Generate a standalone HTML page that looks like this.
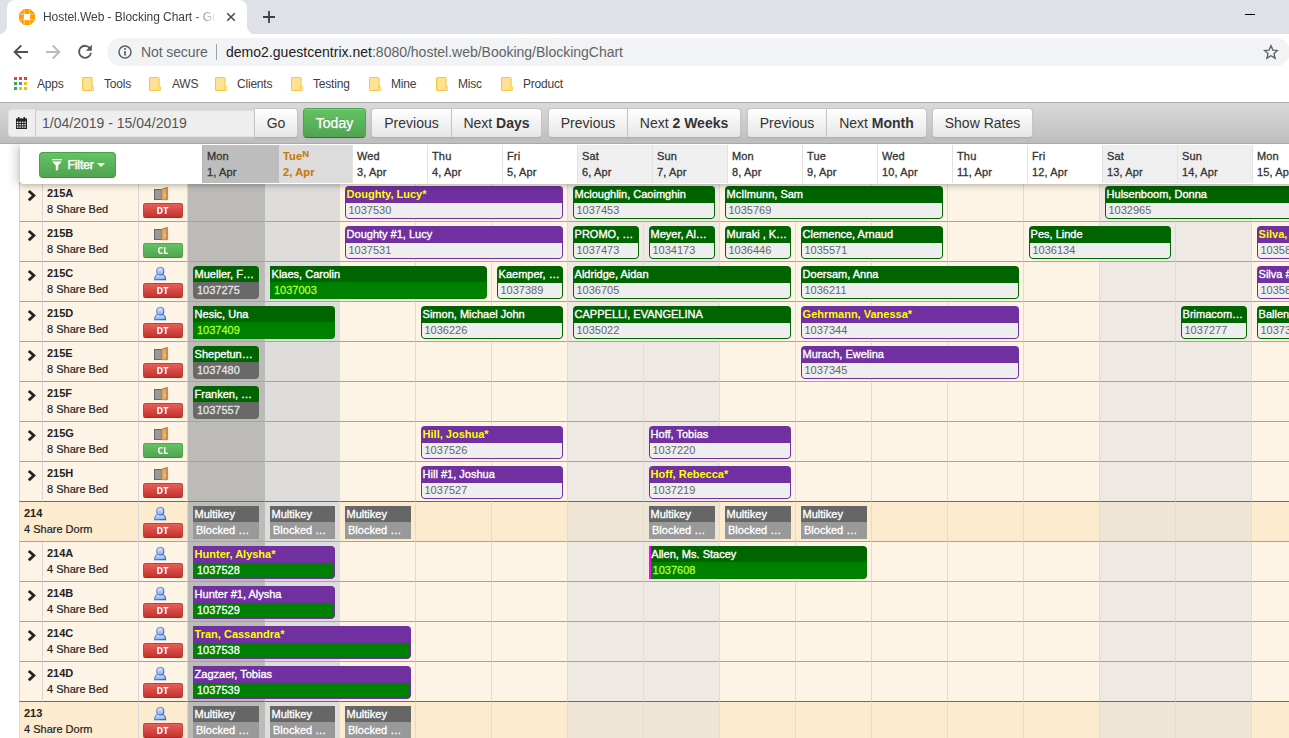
<!DOCTYPE html>
<html lang="en"><head><meta charset="utf-8"><title>Hostel.Web - Blocking Chart - GuestCentrix</title>
<style>
*{box-sizing:border-box;margin:0;padding:0}
html,body{width:1289px;height:738px;overflow:hidden;background:#fff}
body{font-family:"Liberation Sans",Arial,sans-serif;font-size:12px;color:#222;position:relative}
.abs{position:absolute}
/* ---------- browser chrome ---------- */
#tabstrip{position:absolute;left:0;top:0;width:1289px;height:34px;background:#dee1e6}
#tab{position:absolute;left:7px;top:0;width:240px;height:34px;background:#fff;border-radius:8px 8px 0 0}
#tab:before,#tab:after{content:"";position:absolute;bottom:0;width:8px;height:8px;background:radial-gradient(circle at 0 0,#dee1e6 7.5px,#fff 8.5px)}
#tab:before{left:-8px}
#tab:after{right:-8px;background:radial-gradient(circle at 100% 0,#dee1e6 7.5px,#fff 8.5px)}
#tabtitle{position:absolute;left:36px;top:9px;width:176px;height:16px;line-height:16px;font-size:12px;color:#3c4043;white-space:nowrap;overflow:hidden;letter-spacing:-0.05px;
 -webkit-mask-image:linear-gradient(90deg,#000 150px,transparent 174px);mask-image:linear-gradient(90deg,#000 150px,transparent 174px)}
#navbar{position:absolute;left:0;top:34px;width:1289px;height:36px;background:#fff}
#pill{position:absolute;left:107px;top:4px;width:1183px;height:28px;border-radius:14px;background:#f1f3f4}
#bmbar{position:absolute;left:0;top:70px;width:1289px;height:32px;background:#fff}
#bmline{position:absolute;left:0;top:102px;width:1289px;height:1px;background:#adadad}
.bm{position:absolute;top:6px;height:16px;line-height:16px;font-size:12px;color:#3c4043;white-space:nowrap;letter-spacing:-0.2px}
.fold{position:absolute;top:7px;width:12px;height:15px}
/* ---------- page toolbar ---------- */
#ptb{position:absolute;left:0;top:103px;width:1289px;height:41px;background:linear-gradient(#dadada,#bebebe);border-bottom:1px solid #a9a9a9}
.btn{position:absolute;top:5px;height:30px;line-height:28px;font-size:14px;color:#333;text-align:center;white-space:nowrap;
 border:1px solid #c5c5c5;border-bottom-color:#b0b0b0;background:linear-gradient(#ffffff,#e6e6e6);border-radius:4px;
 box-shadow:inset 0 1px 0 rgba(255,255,255,.2),0 1px 2px rgba(0,0,0,.05)}
.btn b{font-weight:bold}
.bl{border-radius:4px 0 0 4px}
.br{border-radius:0 4px 4px 0}
.bm0{border-radius:0}
.btn.green{-webkit-text-stroke:.3px #fff;color:#fff;background:linear-gradient(#62c462,#51a351);border-color:#51a351 #51a351 #387038;text-shadow:0 -1px 0 rgba(0,0,0,.25)}
#addon{position:absolute;left:8px;top:6px;width:28px;height:28px;border:1px solid #e2e2e2;border-right-color:#ccc;background:#eee;border-radius:4px 0 0 4px}
#dinput{position:absolute;left:35px;top:6px;width:220px;height:28px;border:1px solid #e2e2e2;border-left-color:#ccc;border-top-color:#d4d4d4;background:#eee;line-height:26px;font-size:14px;color:#555;padding-left:6px;
 box-shadow:inset 0 1px 1px rgba(0,0,0,.075)}
/* ---------- header ---------- */
#hdr{position:absolute;left:20px;top:144px;width:1280px;height:40px;background:#fff;border-radius:0 0 0 4px;
 box-shadow:-5px 1px 10px rgba(0,0,0,.15), 0 2px 4px rgba(0,0,0,.14)}
.hc{position:absolute;top:1px;height:38px;width:75px;border-left:1px solid #e2e2e2;font-size:11px;color:#333;padding:3px 0 0 4px;line-height:16px;white-space:nowrap;letter-spacing:.15px;-webkit-text-stroke:.3px #333}
.hc sup{font-size:9.5px;line-height:0;position:relative;top:1.5px;vertical-align:super}
.hc.we{background:#efefef}
.hc.past{background:#bdbdbd;border-left-color:#b4b4b4;width:77px}
.hc.today{background:#dcdcdc;color:#c8790a;border-left-color:#dcdcdc;margin-left:2px;width:73px;padding-left:3px;font-weight:bold;-webkit-text-stroke:.15px #c8790a}
#filter{position:absolute;left:19px;top:8px;width:77px;height:26px;border-radius:4px;border:1px solid #4aa04a;border-bottom-color:#3f8a3f;
 background:linear-gradient(#62c462,#51a351);color:#fff;font-size:11.9px;line-height:24px;text-shadow:0 -1px 0 rgba(0,0,0,.25);-webkit-text-stroke:.5px #fff}
/* ---------- grid ---------- */
#grid{position:absolute;left:0;top:0;width:1289px;height:738px;overflow:hidden}
.row{position:absolute;left:20px;width:1280px;height:40px;background:#fef4e6;border-bottom:1px solid #f7941d}
.row.room{border-top:0}
.c{position:absolute;top:0;height:40px;border-right:1px solid #d6d7da;border-bottom:1px solid #f7941d}
.c.exp{left:-1px;width:24px;border-left:1px solid #d0d0d0}
.c.nm{left:23px;width:96px;padding:3px 0 0 4px;line-height:16px;white-space:nowrap;font-size:11px}
.c.nm b{display:block;height:16px;color:#222}
.c.nm span{display:block;height:16px;color:#222;margin-top:0;-webkit-text-stroke:.2px #222}
.c.st{left:119px;width:49px}
.room .c.rn{left:-1px;width:120px;background:#fdebd0;border-left:1px solid #ddd;padding:3px 0 0 4px;line-height:16px;white-space:nowrap;font-size:11px}
.room .c.rn b{display:block;height:16px;color:#222}
.room .c.rn span{display:block;height:16px;color:#222;-webkit-text-stroke:.2px #222}
.d{position:absolute;top:0;width:76px;height:40px;border-right:1px solid #dcdcdc;border-bottom:1px solid #f7941d}
.d.we{background:#eee9e2}
.d.past{background:#bdbbb7;border-right-color:#bbbbba;width:77px}
.d.today{background:#dedddb;border-right-color:#dcdbd9;width:75px;margin-left:1px}
.room .d{background:#fdebd0}
.room .d.we{background:#eee5d4}
.room .d.past{background:#bdbbb7}
.room .d.today{background:#dedddb}
.row.pre,.row.pre .d,.row.pre .c{border-bottom-color:#a1600c}
.room .c.st{background:#fdebd0}
.tag{position:absolute;left:4px;top:21px;width:40px;height:15px;border-radius:2.5px;color:#fff;font-size:11px;font-weight:bold;line-height:14px;text-align:center;
 font-family:"DejaVu Sans Condensed","DejaVu Sans","Liberation Sans",sans-serif;font-size:9.5px;letter-spacing:0}
.tag span{display:inline-block;transform:scaleX(.92);position:relative;top:-.5px;left:-.5px}
.tag.dt{background:linear-gradient(#e65f5a,#c4322d);border:1px solid #c9403b;border-bottom-color:#a92b27}
.tag.cl{background:linear-gradient(#63c363,#52a552);border:1px solid #53a753;border-bottom-color:#418a41}
.ico{position:absolute;left:14px;top:3px;width:16px;height:16px}
.chev{position:absolute;left:8px;top:8px;width:16px;height:16px;overflow:visible}
/* booking blocks */
.bk{position:absolute;top:4px;height:33px;border-radius:4px;overflow:hidden;font-size:11px;white-space:nowrap}
.bk .n{position:absolute;left:0;top:0;right:0;height:16px;line-height:16px;padding-left:1.6px;color:#fff;overflow:hidden;-webkit-text-stroke:.35px #fff}
.bk .r{position:absolute;left:0;top:16px;right:0;height:17px;line-height:16px;padding-left:4px;overflow:hidden}
.bk.g .n{background:#006400}
.bk.p .n{background:#7030a0}
.bk.y .n{color:#ffff00;font-weight:bold;-webkit-text-stroke:0}
.bk.w .n,.bk.pin .n{height:17px}
.bk.w .r{top:17px;height:16px;background:#eee;color:#666;border:1px solid #006400;border-top:0;border-radius:0 0 4px 4px;padding-left:2.5px;line-height:14px}
.bk.p.w .r{border-color:#7030a0}
.bk.in .r{background:#008000;color:#adff2f}
.bk.pin .r{top:17px;height:16px;background:#008000;color:#fff;border:1px solid #7030a0;border-top:0;border-radius:0 0 4px 4px;padding-left:3px;line-height:14px}
.bk.out .r{background:#696969;color:#e4e4e4}
.bk.sl{border-top-left-radius:0;border-bottom-left-radius:0}
.bk.sl .r{border-bottom-left-radius:0}
.bk.mk{border-radius:0}
.bk.mk .n{background:#666}
.bk.mk .r{background:#999;color:#fff;padding-left:3px}
.bk.in .r,.bk.pin .r,.bk.out .r,.bk.mk .r{-webkit-text-stroke:.3px currentColor}
.bk.mg{border-left:2px solid #f0f;border-radius:0 4px 4px 0}
.bk.mg .n{padding-left:.3px}
.bk.mg .r{padding-left:1.6px}
</style></head>
<body>
<div id="grid">
<div class="row" style="top:182px"><div class="c exp"><svg class="chev" viewBox="0 0 16 16"><path d="M1.8 0 L7.9 5.6 L1.8 11.2 L-0.2 9.2 L3.9 5.6 L-0.2 2 Z" fill="#222"/></svg></div><div class="c nm"><b>215A</b><span>8 Share Bed</span></div><div class="c st"><svg class="ico" viewBox="0 0 16 16"><rect x="1.5" y="4.5" width="7" height="10" fill="#999" stroke="#686868"/><path d="M8.3 4.2 L14.6 2.3 L14.6 14.7 L8.3 14.7 Z" fill="#c9914a" stroke="#b57f38" stroke-width=".8"/><path d="M9.4 5 L12.6 4 L12.6 14 L9.4 14 Z" fill="#deb170"/><circle cx="12.3" cy="10.4" r=".9" fill="#ffd83d"/></svg><div class="tag dt"><span>DT</span></div></div><div class="d past" style="left:168px"></div><div class="d today" style="left:244px"></div><div class="d" style="left:320px"></div><div class="d" style="left:396px"></div><div class="d" style="left:472px"></div><div class="d we" style="left:548px"></div><div class="d we" style="left:624px"></div><div class="d" style="left:700px"></div><div class="d" style="left:776px"></div><div class="d" style="left:852px"></div><div class="d" style="left:928px"></div><div class="d" style="left:1004px"></div><div class="d we" style="left:1080px"></div><div class="d we" style="left:1156px"></div><div class="d" style="left:1232px"></div><div class="bk p y w" style="left:325px;width:218px"><div class="n">Doughty, Lucy*</div><div class="r">1037530</div></div><div class="bk g w" style="left:553px;width:142px"><div class="n">Mcloughlin, Caoimghin</div><div class="r">1037453</div></div><div class="bk g w" style="left:705px;width:218px"><div class="n">McIlmunn, Sam</div><div class="r">1035769</div></div><div class="bk g w" style="left:1085px;width:294px"><div class="n">Hulsenboom, Donna</div><div class="r">1032965</div></div></div>
<div class="row" style="top:222px"><div class="c exp"><svg class="chev" viewBox="0 0 16 16"><path d="M1.8 0 L7.9 5.6 L1.8 11.2 L-0.2 9.2 L3.9 5.6 L-0.2 2 Z" fill="#222"/></svg></div><div class="c nm"><b>215B</b><span>8 Share Bed</span></div><div class="c st"><svg class="ico" viewBox="0 0 16 16"><rect x="1.5" y="4.5" width="7" height="10" fill="#999" stroke="#686868"/><path d="M8.3 4.2 L14.6 2.3 L14.6 14.7 L8.3 14.7 Z" fill="#c9914a" stroke="#b57f38" stroke-width=".8"/><path d="M9.4 5 L12.6 4 L12.6 14 L9.4 14 Z" fill="#deb170"/><circle cx="12.3" cy="10.4" r=".9" fill="#ffd83d"/></svg><div class="tag cl"><span>CL</span></div></div><div class="d past" style="left:168px"></div><div class="d today" style="left:244px"></div><div class="d" style="left:320px"></div><div class="d" style="left:396px"></div><div class="d" style="left:472px"></div><div class="d we" style="left:548px"></div><div class="d we" style="left:624px"></div><div class="d" style="left:700px"></div><div class="d" style="left:776px"></div><div class="d" style="left:852px"></div><div class="d" style="left:928px"></div><div class="d" style="left:1004px"></div><div class="d we" style="left:1080px"></div><div class="d we" style="left:1156px"></div><div class="d" style="left:1232px"></div><div class="bk p w" style="left:325px;width:218px"><div class="n">Doughty #1, Lucy</div><div class="r">1037531</div></div><div class="bk g w" style="left:553px;width:66px"><div class="n">PROMO, …</div><div class="r">1037473</div></div><div class="bk g w" style="left:629px;width:66px"><div class="n">Meyer, Al…</div><div class="r">1034173</div></div><div class="bk g w" style="left:705px;width:66px"><div class="n">Muraki , K…</div><div class="r">1036446</div></div><div class="bk g w" style="left:781px;width:142px"><div class="n">Clemence, Arnaud</div><div class="r">1035571</div></div><div class="bk g w" style="left:1009px;width:142px"><div class="n">Pes, Linde</div><div class="r">1036134</div></div><div class="bk p y w" style="left:1237px;width:218px"><div class="n">Silva, Maria*</div><div class="r">1035801</div></div></div>
<div class="row" style="top:262px"><div class="c exp"><svg class="chev" viewBox="0 0 16 16"><path d="M1.8 0 L7.9 5.6 L1.8 11.2 L-0.2 9.2 L3.9 5.6 L-0.2 2 Z" fill="#222"/></svg></div><div class="c nm"><b>215C</b><span>8 Share Bed</span></div><div class="c st"><svg class="ico" viewBox="0 0 16 16"><defs><linearGradient id="pg" x1="0" y1="0" x2="0" y2="1"><stop offset="0" stop-color="#dde8fa"/><stop offset="1" stop-color="#8eaeea"/></linearGradient><linearGradient id="ps" x1="0" y1="0" x2="1" y2="1"><stop offset="0" stop-color="#7ea3e4"/><stop offset="1" stop-color="#2f62c4"/></linearGradient></defs><path d="M1.6 14.6 C1.6 11.2 2.6 10 5.2 9 L9.2 9 C11.8 10 12.6 11.2 12.6 14.6 Z" fill="url(#pg)" stroke="url(#ps)" stroke-width="1.2"/><rect x="3.7" y="2.5" width="7" height="7.4" rx="3" ry="3.2" fill="url(#pg)" stroke="url(#ps)" stroke-width="1.2"/></svg><div class="tag dt"><span>DT</span></div></div><div class="d past" style="left:168px"></div><div class="d today" style="left:244px"></div><div class="d" style="left:320px"></div><div class="d" style="left:396px"></div><div class="d" style="left:472px"></div><div class="d we" style="left:548px"></div><div class="d we" style="left:624px"></div><div class="d" style="left:700px"></div><div class="d" style="left:776px"></div><div class="d" style="left:852px"></div><div class="d" style="left:928px"></div><div class="d" style="left:1004px"></div><div class="d we" style="left:1080px"></div><div class="d we" style="left:1156px"></div><div class="d" style="left:1232px"></div><div class="bk g out" style="left:173px;width:66px"><div class="n">Mueller, F…</div><div class="r">1037275</div></div><div class="bk g in sl" style="left:250px;width:217px"><div class="n">Klaes, Carolin</div><div class="r">1037003</div></div><div class="bk g w" style="left:477px;width:66px"><div class="n">Kaemper, …</div><div class="r">1037389</div></div><div class="bk g w" style="left:553px;width:218px"><div class="n">Aldridge, Aidan</div><div class="r">1036705</div></div><div class="bk g w" style="left:781px;width:218px"><div class="n">Doersam, Anna</div><div class="r">1036211</div></div><div class="bk p w" style="left:1237px;width:218px"><div class="n">Silva #1, Maria</div><div class="r">1035802</div></div></div>
<div class="row" style="top:302px"><div class="c exp"><svg class="chev" viewBox="0 0 16 16"><path d="M1.8 0 L7.9 5.6 L1.8 11.2 L-0.2 9.2 L3.9 5.6 L-0.2 2 Z" fill="#222"/></svg></div><div class="c nm"><b>215D</b><span>8 Share Bed</span></div><div class="c st"><svg class="ico" viewBox="0 0 16 16"><path d="M1.6 14.6 C1.6 11.2 2.6 10 5.2 9 L9.2 9 C11.8 10 12.6 11.2 12.6 14.6 Z" fill="url(#pg)" stroke="url(#ps)" stroke-width="1.2"/><rect x="3.7" y="2.5" width="7" height="7.4" rx="3" ry="3.2" fill="url(#pg)" stroke="url(#ps)" stroke-width="1.2"/></svg><div class="tag dt"><span>DT</span></div></div><div class="d past" style="left:168px"></div><div class="d today" style="left:244px"></div><div class="d" style="left:320px"></div><div class="d" style="left:396px"></div><div class="d" style="left:472px"></div><div class="d we" style="left:548px"></div><div class="d we" style="left:624px"></div><div class="d" style="left:700px"></div><div class="d" style="left:776px"></div><div class="d" style="left:852px"></div><div class="d" style="left:928px"></div><div class="d" style="left:1004px"></div><div class="d we" style="left:1080px"></div><div class="d we" style="left:1156px"></div><div class="d" style="left:1232px"></div><div class="bk g in sl" style="left:173px;width:142px"><div class="n">Nesic, Una</div><div class="r">1037409</div></div><div class="bk g w" style="left:401px;width:142px"><div class="n">Simon, Michael John</div><div class="r">1036226</div></div><div class="bk g w" style="left:553px;width:218px"><div class="n">CAPPELLI, EVANGELINA</div><div class="r">1035022</div></div><div class="bk p y w" style="left:781px;width:218px"><div class="n">Gehrmann, Vanessa*</div><div class="r">1037344</div></div><div class="bk g w" style="left:1161px;width:66px"><div class="n">Brimacom…</div><div class="r">1037277</div></div><div class="bk g w" style="left:1237px;width:218px"><div class="n">Ballentine, Roy</div><div class="r">1037301</div></div></div>
<div class="row" style="top:342px"><div class="c exp"><svg class="chev" viewBox="0 0 16 16"><path d="M1.8 0 L7.9 5.6 L1.8 11.2 L-0.2 9.2 L3.9 5.6 L-0.2 2 Z" fill="#222"/></svg></div><div class="c nm"><b>215E</b><span>8 Share Bed</span></div><div class="c st"><svg class="ico" viewBox="0 0 16 16"><rect x="1.5" y="4.5" width="7" height="10" fill="#999" stroke="#686868"/><path d="M8.3 4.2 L14.6 2.3 L14.6 14.7 L8.3 14.7 Z" fill="#c9914a" stroke="#b57f38" stroke-width=".8"/><path d="M9.4 5 L12.6 4 L12.6 14 L9.4 14 Z" fill="#deb170"/><circle cx="12.3" cy="10.4" r=".9" fill="#ffd83d"/></svg><div class="tag dt"><span>DT</span></div></div><div class="d past" style="left:168px"></div><div class="d today" style="left:244px"></div><div class="d" style="left:320px"></div><div class="d" style="left:396px"></div><div class="d" style="left:472px"></div><div class="d we" style="left:548px"></div><div class="d we" style="left:624px"></div><div class="d" style="left:700px"></div><div class="d" style="left:776px"></div><div class="d" style="left:852px"></div><div class="d" style="left:928px"></div><div class="d" style="left:1004px"></div><div class="d we" style="left:1080px"></div><div class="d we" style="left:1156px"></div><div class="d" style="left:1232px"></div><div class="bk g out" style="left:173px;width:66px"><div class="n">Shepetun…</div><div class="r">1037480</div></div><div class="bk p w" style="left:781px;width:218px"><div class="n">Murach, Ewelina</div><div class="r">1037345</div></div></div>
<div class="row" style="top:382px"><div class="c exp"><svg class="chev" viewBox="0 0 16 16"><path d="M1.8 0 L7.9 5.6 L1.8 11.2 L-0.2 9.2 L3.9 5.6 L-0.2 2 Z" fill="#222"/></svg></div><div class="c nm"><b>215F</b><span>8 Share Bed</span></div><div class="c st"><svg class="ico" viewBox="0 0 16 16"><rect x="1.5" y="4.5" width="7" height="10" fill="#999" stroke="#686868"/><path d="M8.3 4.2 L14.6 2.3 L14.6 14.7 L8.3 14.7 Z" fill="#c9914a" stroke="#b57f38" stroke-width=".8"/><path d="M9.4 5 L12.6 4 L12.6 14 L9.4 14 Z" fill="#deb170"/><circle cx="12.3" cy="10.4" r=".9" fill="#ffd83d"/></svg><div class="tag dt"><span>DT</span></div></div><div class="d past" style="left:168px"></div><div class="d today" style="left:244px"></div><div class="d" style="left:320px"></div><div class="d" style="left:396px"></div><div class="d" style="left:472px"></div><div class="d we" style="left:548px"></div><div class="d we" style="left:624px"></div><div class="d" style="left:700px"></div><div class="d" style="left:776px"></div><div class="d" style="left:852px"></div><div class="d" style="left:928px"></div><div class="d" style="left:1004px"></div><div class="d we" style="left:1080px"></div><div class="d we" style="left:1156px"></div><div class="d" style="left:1232px"></div><div class="bk g out" style="left:173px;width:66px"><div class="n">Franken, …</div><div class="r">1037557</div></div></div>
<div class="row" style="top:422px"><div class="c exp"><svg class="chev" viewBox="0 0 16 16"><path d="M1.8 0 L7.9 5.6 L1.8 11.2 L-0.2 9.2 L3.9 5.6 L-0.2 2 Z" fill="#222"/></svg></div><div class="c nm"><b>215G</b><span>8 Share Bed</span></div><div class="c st"><svg class="ico" viewBox="0 0 16 16"><rect x="1.5" y="4.5" width="7" height="10" fill="#999" stroke="#686868"/><path d="M8.3 4.2 L14.6 2.3 L14.6 14.7 L8.3 14.7 Z" fill="#c9914a" stroke="#b57f38" stroke-width=".8"/><path d="M9.4 5 L12.6 4 L12.6 14 L9.4 14 Z" fill="#deb170"/><circle cx="12.3" cy="10.4" r=".9" fill="#ffd83d"/></svg><div class="tag cl"><span>CL</span></div></div><div class="d past" style="left:168px"></div><div class="d today" style="left:244px"></div><div class="d" style="left:320px"></div><div class="d" style="left:396px"></div><div class="d" style="left:472px"></div><div class="d we" style="left:548px"></div><div class="d we" style="left:624px"></div><div class="d" style="left:700px"></div><div class="d" style="left:776px"></div><div class="d" style="left:852px"></div><div class="d" style="left:928px"></div><div class="d" style="left:1004px"></div><div class="d we" style="left:1080px"></div><div class="d we" style="left:1156px"></div><div class="d" style="left:1232px"></div><div class="bk p y w" style="left:401px;width:142px"><div class="n">Hill, Joshua*</div><div class="r">1037526</div></div><div class="bk p w" style="left:629px;width:142px"><div class="n">Hoff, Tobias</div><div class="r">1037220</div></div></div>
<div class="row pre" style="top:462px"><div class="c exp"><svg class="chev" viewBox="0 0 16 16"><path d="M1.8 0 L7.9 5.6 L1.8 11.2 L-0.2 9.2 L3.9 5.6 L-0.2 2 Z" fill="#222"/></svg></div><div class="c nm"><b>215H</b><span>8 Share Bed</span></div><div class="c st"><svg class="ico" viewBox="0 0 16 16"><rect x="1.5" y="4.5" width="7" height="10" fill="#999" stroke="#686868"/><path d="M8.3 4.2 L14.6 2.3 L14.6 14.7 L8.3 14.7 Z" fill="#c9914a" stroke="#b57f38" stroke-width=".8"/><path d="M9.4 5 L12.6 4 L12.6 14 L9.4 14 Z" fill="#deb170"/><circle cx="12.3" cy="10.4" r=".9" fill="#ffd83d"/></svg><div class="tag dt"><span>DT</span></div></div><div class="d past" style="left:168px"></div><div class="d today" style="left:244px"></div><div class="d" style="left:320px"></div><div class="d" style="left:396px"></div><div class="d" style="left:472px"></div><div class="d we" style="left:548px"></div><div class="d we" style="left:624px"></div><div class="d" style="left:700px"></div><div class="d" style="left:776px"></div><div class="d" style="left:852px"></div><div class="d" style="left:928px"></div><div class="d" style="left:1004px"></div><div class="d we" style="left:1080px"></div><div class="d we" style="left:1156px"></div><div class="d" style="left:1232px"></div><div class="bk p w" style="left:401px;width:142px"><div class="n">Hill #1, Joshua</div><div class="r">1037527</div></div><div class="bk p y w" style="left:629px;width:142px"><div class="n">Hoff, Rebecca*</div><div class="r">1037219</div></div></div>
<div class="row room" style="top:502px"><div class="c rn"><b>214</b><span>4 Share Dorm</span></div><div class="c st"><svg class="ico" viewBox="0 0 16 16"><path d="M1.6 14.6 C1.6 11.2 2.6 10 5.2 9 L9.2 9 C11.8 10 12.6 11.2 12.6 14.6 Z" fill="url(#pg)" stroke="url(#ps)" stroke-width="1.2"/><rect x="3.7" y="2.5" width="7" height="7.4" rx="3" ry="3.2" fill="url(#pg)" stroke="url(#ps)" stroke-width="1.2"/></svg><div class="tag dt"><span>DT</span></div></div><div class="d past" style="left:168px"></div><div class="d today" style="left:244px"></div><div class="d" style="left:320px"></div><div class="d" style="left:396px"></div><div class="d" style="left:472px"></div><div class="d we" style="left:548px"></div><div class="d we" style="left:624px"></div><div class="d" style="left:700px"></div><div class="d" style="left:776px"></div><div class="d" style="left:852px"></div><div class="d" style="left:928px"></div><div class="d" style="left:1004px"></div><div class="d we" style="left:1080px"></div><div class="d we" style="left:1156px"></div><div class="d" style="left:1232px"></div><div class="bk mk" style="left:173px;width:66px"><div class="n">Multikey</div><div class="r">Blocked …</div></div><div class="bk mk" style="left:250px;width:65px"><div class="n">Multikey</div><div class="r">Blocked …</div></div><div class="bk mk" style="left:325px;width:66px"><div class="n">Multikey</div><div class="r">Blocked …</div></div><div class="bk mk" style="left:629px;width:66px"><div class="n">Multikey</div><div class="r">Blocked …</div></div><div class="bk mk" style="left:705px;width:66px"><div class="n">Multikey</div><div class="r">Blocked …</div></div><div class="bk mk" style="left:781px;width:66px"><div class="n">Multikey</div><div class="r">Blocked …</div></div></div>
<div class="row" style="top:542px"><div class="c exp"><svg class="chev" viewBox="0 0 16 16"><path d="M1.8 0 L7.9 5.6 L1.8 11.2 L-0.2 9.2 L3.9 5.6 L-0.2 2 Z" fill="#222"/></svg></div><div class="c nm"><b>214A</b><span>4 Share Bed</span></div><div class="c st"><svg class="ico" viewBox="0 0 16 16"><path d="M1.6 14.6 C1.6 11.2 2.6 10 5.2 9 L9.2 9 C11.8 10 12.6 11.2 12.6 14.6 Z" fill="url(#pg)" stroke="url(#ps)" stroke-width="1.2"/><rect x="3.7" y="2.5" width="7" height="7.4" rx="3" ry="3.2" fill="url(#pg)" stroke="url(#ps)" stroke-width="1.2"/></svg><div class="tag dt"><span>DT</span></div></div><div class="d past" style="left:168px"></div><div class="d today" style="left:244px"></div><div class="d" style="left:320px"></div><div class="d" style="left:396px"></div><div class="d" style="left:472px"></div><div class="d we" style="left:548px"></div><div class="d we" style="left:624px"></div><div class="d" style="left:700px"></div><div class="d" style="left:776px"></div><div class="d" style="left:852px"></div><div class="d" style="left:928px"></div><div class="d" style="left:1004px"></div><div class="d we" style="left:1080px"></div><div class="d we" style="left:1156px"></div><div class="d" style="left:1232px"></div><div class="bk p y pin sl" style="left:173px;width:142px"><div class="n">Hunter, Alysha*</div><div class="r">1037528</div></div><div class="bk g in mg" style="left:629px;width:218px"><div class="n">Allen, Ms. Stacey</div><div class="r">1037608</div></div></div>
<div class="row" style="top:582px"><div class="c exp"><svg class="chev" viewBox="0 0 16 16"><path d="M1.8 0 L7.9 5.6 L1.8 11.2 L-0.2 9.2 L3.9 5.6 L-0.2 2 Z" fill="#222"/></svg></div><div class="c nm"><b>214B</b><span>4 Share Bed</span></div><div class="c st"><svg class="ico" viewBox="0 0 16 16"><path d="M1.6 14.6 C1.6 11.2 2.6 10 5.2 9 L9.2 9 C11.8 10 12.6 11.2 12.6 14.6 Z" fill="url(#pg)" stroke="url(#ps)" stroke-width="1.2"/><rect x="3.7" y="2.5" width="7" height="7.4" rx="3" ry="3.2" fill="url(#pg)" stroke="url(#ps)" stroke-width="1.2"/></svg><div class="tag dt"><span>DT</span></div></div><div class="d past" style="left:168px"></div><div class="d today" style="left:244px"></div><div class="d" style="left:320px"></div><div class="d" style="left:396px"></div><div class="d" style="left:472px"></div><div class="d we" style="left:548px"></div><div class="d we" style="left:624px"></div><div class="d" style="left:700px"></div><div class="d" style="left:776px"></div><div class="d" style="left:852px"></div><div class="d" style="left:928px"></div><div class="d" style="left:1004px"></div><div class="d we" style="left:1080px"></div><div class="d we" style="left:1156px"></div><div class="d" style="left:1232px"></div><div class="bk p pin sl" style="left:173px;width:142px"><div class="n">Hunter #1, Alysha</div><div class="r">1037529</div></div></div>
<div class="row" style="top:622px"><div class="c exp"><svg class="chev" viewBox="0 0 16 16"><path d="M1.8 0 L7.9 5.6 L1.8 11.2 L-0.2 9.2 L3.9 5.6 L-0.2 2 Z" fill="#222"/></svg></div><div class="c nm"><b>214C</b><span>4 Share Bed</span></div><div class="c st"><svg class="ico" viewBox="0 0 16 16"><path d="M1.6 14.6 C1.6 11.2 2.6 10 5.2 9 L9.2 9 C11.8 10 12.6 11.2 12.6 14.6 Z" fill="url(#pg)" stroke="url(#ps)" stroke-width="1.2"/><rect x="3.7" y="2.5" width="7" height="7.4" rx="3" ry="3.2" fill="url(#pg)" stroke="url(#ps)" stroke-width="1.2"/></svg><div class="tag dt"><span>DT</span></div></div><div class="d past" style="left:168px"></div><div class="d today" style="left:244px"></div><div class="d" style="left:320px"></div><div class="d" style="left:396px"></div><div class="d" style="left:472px"></div><div class="d we" style="left:548px"></div><div class="d we" style="left:624px"></div><div class="d" style="left:700px"></div><div class="d" style="left:776px"></div><div class="d" style="left:852px"></div><div class="d" style="left:928px"></div><div class="d" style="left:1004px"></div><div class="d we" style="left:1080px"></div><div class="d we" style="left:1156px"></div><div class="d" style="left:1232px"></div><div class="bk p y pin sl" style="left:173px;width:218px"><div class="n">Tran, Cassandra*</div><div class="r">1037538</div></div></div>
<div class="row pre" style="top:662px"><div class="c exp"><svg class="chev" viewBox="0 0 16 16"><path d="M1.8 0 L7.9 5.6 L1.8 11.2 L-0.2 9.2 L3.9 5.6 L-0.2 2 Z" fill="#222"/></svg></div><div class="c nm"><b>214D</b><span>4 Share Bed</span></div><div class="c st"><svg class="ico" viewBox="0 0 16 16"><path d="M1.6 14.6 C1.6 11.2 2.6 10 5.2 9 L9.2 9 C11.8 10 12.6 11.2 12.6 14.6 Z" fill="url(#pg)" stroke="url(#ps)" stroke-width="1.2"/><rect x="3.7" y="2.5" width="7" height="7.4" rx="3" ry="3.2" fill="url(#pg)" stroke="url(#ps)" stroke-width="1.2"/></svg><div class="tag dt"><span>DT</span></div></div><div class="d past" style="left:168px"></div><div class="d today" style="left:244px"></div><div class="d" style="left:320px"></div><div class="d" style="left:396px"></div><div class="d" style="left:472px"></div><div class="d we" style="left:548px"></div><div class="d we" style="left:624px"></div><div class="d" style="left:700px"></div><div class="d" style="left:776px"></div><div class="d" style="left:852px"></div><div class="d" style="left:928px"></div><div class="d" style="left:1004px"></div><div class="d we" style="left:1080px"></div><div class="d we" style="left:1156px"></div><div class="d" style="left:1232px"></div><div class="bk p pin sl" style="left:173px;width:218px"><div class="n">Zagzaer, Tobias</div><div class="r">1037539</div></div></div>
<div class="row room" style="top:702px"><div class="c rn"><b>213</b><span>4 Share Dorm</span></div><div class="c st"><svg class="ico" viewBox="0 0 16 16"><path d="M1.6 14.6 C1.6 11.2 2.6 10 5.2 9 L9.2 9 C11.8 10 12.6 11.2 12.6 14.6 Z" fill="url(#pg)" stroke="url(#ps)" stroke-width="1.2"/><rect x="3.7" y="2.5" width="7" height="7.4" rx="3" ry="3.2" fill="url(#pg)" stroke="url(#ps)" stroke-width="1.2"/></svg><div class="tag dt"><span>DT</span></div></div><div class="d past" style="left:168px"></div><div class="d today" style="left:244px"></div><div class="d" style="left:320px"></div><div class="d" style="left:396px"></div><div class="d" style="left:472px"></div><div class="d we" style="left:548px"></div><div class="d we" style="left:624px"></div><div class="d" style="left:700px"></div><div class="d" style="left:776px"></div><div class="d" style="left:852px"></div><div class="d" style="left:928px"></div><div class="d" style="left:1004px"></div><div class="d we" style="left:1080px"></div><div class="d we" style="left:1156px"></div><div class="d" style="left:1232px"></div><div class="bk mk" style="left:173px;width:66px"><div class="n">Multikey</div><div class="r">Blocked …</div></div><div class="bk mk" style="left:250px;width:65px"><div class="n">Multikey</div><div class="r">Blocked …</div></div><div class="bk mk" style="left:325px;width:66px"><div class="n">Multikey</div><div class="r">Blocked …</div></div></div>
</div>
<div id="hdr"><div id="filter"><svg class="abs" style="left:12px;top:6px" width="10" height="12" viewBox="0 0 10 12"><path d="M0 0.1h10v1.2H0z M0.2 2.5h9.6L6.2 6.6v3.8L3.8 12V6.6z" fill="#fff"/></svg><span class="abs" style="left:27.5px;top:0;letter-spacing:-0.05px">Filter</span><span class="abs" style="left:57px;top:10px;width:0;height:0;border:4px solid transparent;border-top-color:#fff;border-bottom:0"></span></div><div class="hc past" style="left:182px">Mon<br>1, Apr</div><div class="hc today" style="left:257px">Tue<sup>N</sup><br>2, Apr</div><div class="hc" style="left:332px">Wed<br>3, Apr</div><div class="hc" style="left:407px">Thu<br>4, Apr</div><div class="hc" style="left:482px">Fri<br>5, Apr</div><div class="hc we" style="left:557px">Sat<br>6, Apr</div><div class="hc we" style="left:632px">Sun<br>7, Apr</div><div class="hc" style="left:707px">Mon<br>8, Apr</div><div class="hc" style="left:782px">Tue<br>9, Apr</div><div class="hc" style="left:857px">Wed<br>10, Apr</div><div class="hc" style="left:932px">Thu<br>11, Apr</div><div class="hc" style="left:1007px">Fri<br>12, Apr</div><div class="hc we" style="left:1082px">Sat<br>13, Apr</div><div class="hc we" style="left:1157px">Sun<br>14, Apr</div><div class="hc" style="left:1232px">Mon<br>15, Apr</div></div>
<div id="ptb"><div id="addon"><svg class="abs" style="left:7px;top:6px" width="11" height="13" viewBox="0 0 11 13"><path d="M0 2.4h11V13H0z" fill="#222"/><path d="M2 1h1.4v2H2zM7.6 1H9v2H7.6z" fill="#222"/><rect x="0.9" y="5.6" width="1.5" height="1.4" fill="#eee"/><rect x="3.4" y="5.6" width="1.5" height="1.4" fill="#eee"/><rect x="5.9" y="5.6" width="1.5" height="1.4" fill="#eee"/><rect x="8.4" y="5.6" width="1.5" height="1.4" fill="#eee"/><rect x="0.9" y="8" width="1.5" height="1.4" fill="#eee"/><rect x="3.4" y="8" width="1.5" height="1.4" fill="#eee"/><rect x="5.9" y="8" width="1.5" height="1.4" fill="#eee"/><rect x="8.4" y="8" width="1.5" height="1.4" fill="#eee"/><rect x="0.9" y="10.4" width="1.5" height="1.4" fill="#eee"/><rect x="3.4" y="10.4" width="1.5" height="1.4" fill="#eee"/><rect x="5.9" y="10.4" width="1.5" height="1.4" fill="#eee"/><rect x="8.4" y="10.4" width="1.5" height="1.4" fill="#eee"/></svg></div><div id="dinput">1/04/2019 - 15/04/2019</div><div class="btn br" style="left:254px;width:44px">Go</div><div class="btn green" style="left:303px;width:63px">Today</div><div class="btn bl" style="left:371px;width:81px">Previous</div><div class="btn br" style="left:451px;width:91px">Next <b>Days</b></div><div class="btn bl" style="left:548px;width:80px">Previous</div><div class="btn br" style="left:627px;width:114px">Next <b>2 Weeks</b></div><div class="btn bl" style="left:747px;width:80px">Previous</div><div class="btn br" style="left:826px;width:101px">Next <b>Month</b></div><div class="btn " style="left:932px;width:101px">Show Rates</div></div>
<div id="tabstrip"><div id="tab"><svg class="abs" style="left:12px;top:9px" width="16" height="16" viewBox="0 0 16 16"><path d="M5 0h6l5 5v6l-5 5H5l-5-5V5z" fill="#ff9d00" stroke="#ff9d00" stroke-width=".6" stroke-linejoin="round"/><path d="M5.2 0v16M10.8 0v16M0 5.2h16M0 10.8h16" stroke="#ffd595" stroke-width=".8"/><rect x="5" y="5" width="6" height="6" fill="#fff"/></svg><div id="tabtitle">Hostel.Web - Blocking Chart - GuestCentrix</div><svg class="abs" style="left:219px;top:12px" width="10" height="10" viewBox="0 0 10 10"><path d="M1.2 1.2l7.6 7.6M8.8 1.2L1.2 8.8" stroke="#45494d" stroke-width="1.5" fill="none"/></svg></div><svg class="abs" style="left:262px;top:10px" width="14" height="14" viewBox="0 0 14 14"><path d="M7 1v12M1 7h12" stroke="#3c4043" stroke-width="1.8"/></svg><div class="abs" style="left:1245px;top:14px;width:10px;height:1px;background:#000"></div></div>
<div id="navbar"><div id="pill"></div><svg class="abs" style="left:13px;top:10px" width="16" height="16" viewBox="0 0 16 16"><path d="M15 8H2.8M8.3 1.4L1.7 8l6.6 6.6" fill="none" stroke="#4d5156" stroke-width="2"/></svg><svg class="abs" style="left:45px;top:10px" width="16" height="16" viewBox="0 0 16 16"><path d="M1 8h12.2M7.7 1.4L14.3 8l-6.6 6.6" fill="none" stroke="#b9bbbe" stroke-width="2"/></svg><svg class="abs" style="left:77px;top:10px" width="16" height="16" viewBox="0 0 16 16"><path d="M13.2 4.6A6 6 0 1 0 14 8.8" fill="none" stroke="#54585d" stroke-width="1.8"/><path d="M14.8 .8v6H8.8z" fill="#54585d"/></svg><svg class="abs" style="left:118px;top:11px" width="14" height="14" viewBox="0 0 14 14"><circle cx="7" cy="7" r="6" fill="none" stroke="#5a5e63" stroke-width="1.5"/><path d="M7 6.1v4.4" stroke="#5a5e63" stroke-width="1.7"/><circle cx="7" cy="3.9" r="1" fill="#5a5e63"/></svg><div class="abs" style="left:141px;top:9px;font-size:14px;line-height:18px;color:#5f6368;white-space:nowrap;letter-spacing:-0.1px">Not secure</div><div class="abs" style="left:216px;top:10px;width:1px;height:16px;background:#9aa0a6"></div><div class="abs" style="left:226px;top:9px;font-size:14px;line-height:18px;color:#202124;white-space:nowrap;letter-spacing:0.02px">demo2.guestcentrix.net<span style="color:#5f6368;letter-spacing:-0.01px">:8080/hostel.web/Booking/BlockingChart</span></div><svg class="abs" style="left:1263px;top:10px" width="16" height="16" viewBox="0 0 16 16"><path d="M8 1.8l1.9 4.3 4.6.4-3.5 3.1 1.1 4.6L8 11.7l-4.1 2.5 1.1-4.6L1.5 6.5l4.6-.4z" fill="none" stroke="#5f6368" stroke-width="1.4" stroke-linejoin="miter"/></svg></div>
<div id="bmbar"><svg class="abs" style="left:14px;top:7px" width="14" height="14" viewBox="0 0 14 14"><rect x="0" y="0" width="3" height="3" fill="#ea4335"/><rect x="5" y="0" width="3" height="3" fill="#ea4335"/><rect x="10" y="0" width="3" height="3" fill="#ea4335"/><rect x="0" y="5" width="3" height="3" fill="#34a853"/><rect x="5" y="5" width="3" height="3" fill="#4285f4"/><rect x="10" y="5" width="3" height="3" fill="#fbbc05"/><rect x="0" y="10" width="3" height="3" fill="#34a853"/><rect x="5" y="10" width="3" height="3" fill="#fbbc05"/><rect x="10" y="10" width="3" height="3" fill="#fbbc05"/></svg><div class="bm" style="left:37px">Apps</div><svg class="fold" style="left:82px" viewBox="0 0 12 15"><rect x=".5" y=".5" width="9.6" height="13" rx=".6" fill="#fde293" stroke="#f7c540"/><rect x="9.5" y="9.4" width="2" height="4.1" rx=".5" fill="#fef1c4" stroke="#f7c540" stroke-width=".8"/></svg><div class="bm" style="left:104px">Tools</div><svg class="fold" style="left:149px" viewBox="0 0 12 15"><rect x=".5" y=".5" width="9.6" height="13" rx=".6" fill="#fde293" stroke="#f7c540"/><rect x="9.5" y="9.4" width="2" height="4.1" rx=".5" fill="#fef1c4" stroke="#f7c540" stroke-width=".8"/></svg><div class="bm" style="left:172px">AWS</div><svg class="fold" style="left:215px" viewBox="0 0 12 15"><rect x=".5" y=".5" width="9.6" height="13" rx=".6" fill="#fde293" stroke="#f7c540"/><rect x="9.5" y="9.4" width="2" height="4.1" rx=".5" fill="#fef1c4" stroke="#f7c540" stroke-width=".8"/></svg><div class="bm" style="left:237px">Clients</div><svg class="fold" style="left:291px" viewBox="0 0 12 15"><rect x=".5" y=".5" width="9.6" height="13" rx=".6" fill="#fde293" stroke="#f7c540"/><rect x="9.5" y="9.4" width="2" height="4.1" rx=".5" fill="#fef1c4" stroke="#f7c540" stroke-width=".8"/></svg><div class="bm" style="left:313px">Testing</div><svg class="fold" style="left:369px" viewBox="0 0 12 15"><rect x=".5" y=".5" width="9.6" height="13" rx=".6" fill="#fde293" stroke="#f7c540"/><rect x="9.5" y="9.4" width="2" height="4.1" rx=".5" fill="#fef1c4" stroke="#f7c540" stroke-width=".8"/></svg><div class="bm" style="left:391px">Mine</div><svg class="fold" style="left:436px" viewBox="0 0 12 15"><rect x=".5" y=".5" width="9.6" height="13" rx=".6" fill="#fde293" stroke="#f7c540"/><rect x="9.5" y="9.4" width="2" height="4.1" rx=".5" fill="#fef1c4" stroke="#f7c540" stroke-width=".8"/></svg><div class="bm" style="left:458px">Misc</div><svg class="fold" style="left:501px" viewBox="0 0 12 15"><rect x=".5" y=".5" width="9.6" height="13" rx=".6" fill="#fde293" stroke="#f7c540"/><rect x="9.5" y="9.4" width="2" height="4.1" rx=".5" fill="#fef1c4" stroke="#f7c540" stroke-width=".8"/></svg><div class="bm" style="left:523px">Product</div></div><div id="bmline"></div>
</body></html>
